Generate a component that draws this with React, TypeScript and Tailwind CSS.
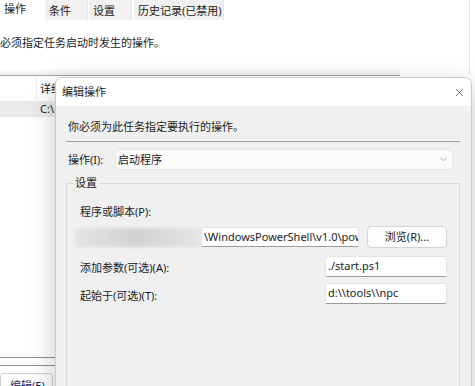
import { X, ChevronDown } from 'lucide-react';

const font = "font-['Noto_Sans','Noto_Sans_CJK_SC',sans-serif]";

function Tabs() {
  return (
    <div className="flex h-[20px] text-[11px] leading-[16px]">
      <div className="w-[44px] bg-white pl-[4px] pt-[1px]">操作</div>
      <div className="ml-[1px] w-[43px] bg-[#f1f1f1] border-r border-[#e6e6e6] pl-[4px] pt-[3px]">条件</div>
      <div className="ml-[1px] w-[43px] bg-[#f1f1f1] border-r border-[#e6e6e6] pl-[4px] pt-[3px]">设置</div>
      <div className="ml-[2px] w-[90px] bg-[#f1f1f1] border-r border-[#e6e6e6] pl-[4px] pt-[3px]">历史记录(已禁用)</div>
      <div className="flex-1" />
    </div>
  );
}

function BackgroundWindow() {
  return (
    <div className="absolute inset-0 flex flex-col bg-white">
      <div className="flex">
        <div className="flex-1">
          <Tabs />
          <div className="ml-[-11px] mt-[15px] text-[11px] leading-[16px]">你必须指定任务启动时发生的操作。</div>
          <div className="mt-[18px] h-[6px] w-[400px] bg-gradient-to-b from-white to-[#ececec]" />
        </div>
        <div className="mr-[5px] w-px bg-[#e2e2e2]" />
      </div>
      {/* list */}
      <div className="flex h-[282px] w-[400px] shrink-0 flex-col border-t border-[#a6a6a6]">
        <div className="flex h-[25px] items-center">
          <div className="h-full w-[37px] border-r border-[#ededed]" />
          <div className="pl-[3px] text-[11px] leading-[16px]">详细</div>
        </div>
        <div className="flex h-[16px] items-center bg-[#ebebeb]">
          <div className="w-[40px]" />
          <div className="text-[11px] leading-[16px]">C:\</div>
        </div>
      </div>
      <div className="h-px w-[400px] shrink-0 bg-[#8e8e8e]" />
      <div className="mt-[7px] h-px w-[400px] shrink-0 bg-[#8e8e8e]" />
      <div className="mt-[7px] flex shrink-0">
        <div className="h-[24px] w-[53px] rounded-[3px] border border-[#cfcfcf] bg-[#fdfdfd] pl-[9px] pt-[4px] text-[11px] leading-[16px] text-[#1a1a6a]">
          编辑(E)
        </div>
      </div>
    </div>
  );
}

function Input({ value, className }: { value: string; className: string }) {
  return (
    <div
      className={`overflow-hidden whitespace-nowrap rounded-[2px] border border-[#e3e3e3] border-b-[#9a9a9a] bg-white pl-[2px] text-[11px] leading-[18px] ${className}`}
    >
      {value}
    </div>
  );
}

function Dialog() {
  return (
    <div className="absolute left-[55px] top-[77px] h-[330px] w-[417px] overflow-hidden rounded-t-[7px] border border-[#c9c9c9] bg-[#f0f0f0] shadow-[0_8px_28px_rgba(0,0,0,0.22)]">
      <div className="flex h-[28px] items-center justify-between bg-white pl-[6px] pr-[5px] text-[11px] leading-[16px]">
        <span>编辑操作</span>
        <X size={13} strokeWidth={1.2} className="text-[#222]" />
      </div>
      <div className="flex flex-col pl-[10px] pr-[11px] text-[11px] leading-[16px]">
        <div className="mt-[13px] pl-[2px]">你必须为此任务指定要执行的操作。</div>
        <div className="mt-[6px] h-px bg-[#a3a3a3]" />
        <div className="mt-[7px] flex h-[21px] items-center">
          <div className="w-[49px] pl-[2px]">操作(I):</div>
          <div className="mr-[7px] flex h-full flex-1 items-center justify-between rounded-[4px] border border-[#e6e6e6] bg-[#fbfbfb] pl-[2px] pr-[3px]">
            <span>启动程序</span>
            <ChevronDown size={11} strokeWidth={1.2} className="text-[#666]" />
          </div>
        </div>
        <fieldset className="mt-[5px] h-[240px] border border-[#dadada] pl-[8px] pr-[12px]">
          <legend className="ml-[-2px] px-[2px]">设置</legend>
          <div className="mt-[13px] pl-[5px]">程序或脚本(P):</div>
          <div className="mt-[6px] flex h-[22px] items-center">
            <div className="h-[19px] w-[126px] bg-gradient-to-r from-[#e4e4e4] via-[#d2d2d2] to-[#e6e6e6] blur-[1.5px]" />
            <Input value="\WindowsPowerShell\v1.0\pow" className="h-[20px] w-[158px]" />
            <div className="ml-[8px] flex h-[22px] w-[80px] items-center justify-center rounded-[4px] border border-[#d3d3d3] bg-[#fdfdfd]">
              浏览(R)...
            </div>
          </div>
          <div className="mt-[8px] flex h-[21px] items-center">
            <div className="flex-1 pl-[5px] pt-[2px]">添加参数(可选)(A):</div>
            <Input value="./start.ps1" className="h-[21px] w-[122px]" />
          </div>
          <div className="mt-[6px] flex h-[21px] items-center">
            <div className="flex-1 pl-[5px] pt-[4px]">起始于(可选)(T):</div>
            <Input value="d:\\tools\\npc" className="h-[21px] w-[122px]" />
          </div>
        </fieldset>
      </div>
    </div>
  );
}

export default function App() {
  return (
    <div className={`relative h-[386px] w-[475px] overflow-hidden bg-[#f3f3f3] text-[#1b1b1b] ${font}`}>
      <BackgroundWindow />
      <Dialog />
    </div>
  );
}
